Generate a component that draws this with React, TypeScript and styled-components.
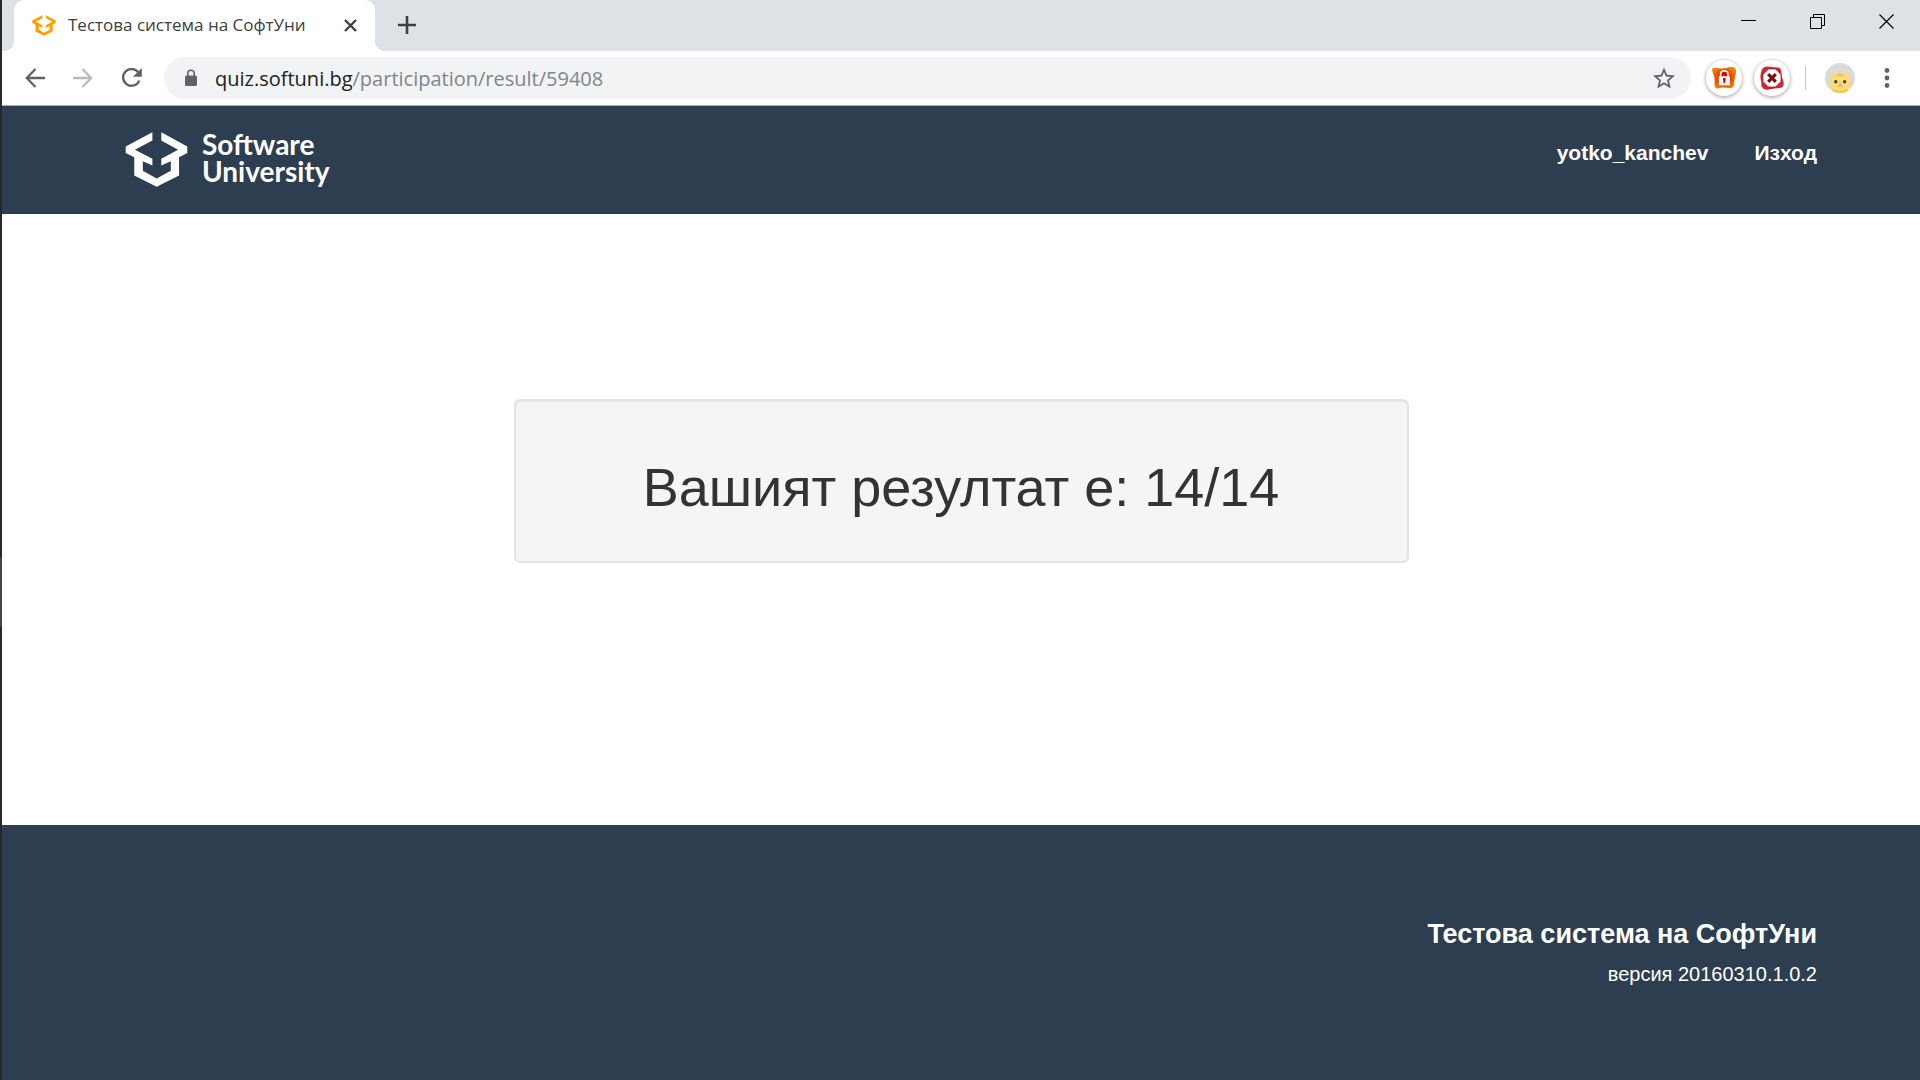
import React from "react";
import styled, { createGlobalStyle } from "styled-components";

const NAVY = "#2d3e50";
const ARIAL = `"Liberation Sans", Arial, sans-serif`;
const SEGOE = `"Open Sans", "Noto Sans", sans-serif`;

const GlobalStyle = createGlobalStyle`
  *, *::before, *::after { box-sizing: border-box; }
  body { margin: 0; background: #fff; font-family: ${ARIAL}; }
  svg { display: block; flex: none; }
  button { margin: 0; padding: 0; border: 0; background: none; font: inherit; cursor: pointer; }
`;

const Screen = styled.div`
  display: flex;
  min-height: 100vh;
`;

const DesktopEdge = styled.div`
  flex: none;
  width: 2px;
  background: linear-gradient(#26282b 0 557px, #454545 557px 627px, #26282b 627px);
`;

const Window = styled.div`
  flex: 1;
  min-width: 0;
  display: flex;
  flex-direction: column;
`;

const TabStrip = styled.div`
  display: flex;
  align-items: flex-start;
  height: 51px;
  padding-left: 12px;
  background: #dee1e6;
`;

const Tab = styled.div`
  position: relative;
  display: flex;
  align-items: center;
  width: 361px;
  height: 51px;
  padding: 0 15px 1px 18px;
  background: #fff;
  border-radius: 10px 10px 0 0;

  &::before,
  &::after {
    content: "";
    position: absolute;
    bottom: 0;
    width: 10px;
    height: 10px;
  }
  &::before {
    right: 100%;
    background: radial-gradient(circle at 0 0, transparent 10px, #fff 10px);
  }
  &::after {
    left: 100%;
    background: radial-gradient(circle at 100% 0, transparent 10px, #fff 10px);
  }
`;

const TabTitle = styled.span`
  flex: 1;
  padding-left: 12px;
  font: 17px/24px ${SEGOE};
  color: #3c4043;
  white-space: nowrap;
`;

const IconButton = styled.button<{ $w: number; $h: number; $color?: string }>`
  display: flex;
  flex: none;
  align-items: center;
  justify-content: center;
  width: ${(p) => p.$w}px;
  height: ${(p) => p.$h}px;
  color: ${(p) => p.$color ?? "#5f6368"};
`;

const WindowControls = styled.div`
  display: flex;
  margin-left: auto;
`;

const Toolbar = styled.div`
  display: flex;
  align-items: center;
  height: 55px;
  padding: 0 1px 0 9px;
  background: #fff;
  border-bottom: 1px solid #a9adb2;
`;

const AddressBar = styled.div`
  flex: 1;
  min-width: 0;
  display: flex;
  align-items: center;
  height: 42px;
  margin: 0 15px 0 9px;
  padding: 0 10px 0 20px;
  border-radius: 21px;
  background: #f1f3f4;
  color: #5f6368;
  font: 20px/28px ${SEGOE};
`;

const Host = styled.label`
  padding: 2px 0 0 17px;
  color: #202124;
`;

const PathInput = styled.input`
  flex: 1;
  min-width: 0;
  padding: 2px 0 0;
  border: 0;
  outline: 0;
  background: none;
  font: inherit;
  color: #80868b;
`;

const Extensions = styled.div`
  display: flex;
  align-items: center;
  gap: 12px;
`;

const Badge = styled.button`
  display: flex;
  align-items: center;
  justify-content: center;
  width: 36px;
  height: 36px;
  border-radius: 50%;
  background: #fff;
  box-shadow: 0 1px 4px rgba(0, 0, 0, 0.4);
`;

const Divider = styled.span`
  width: 1px;
  height: 24px;
  margin: 0 19px 0 15px;
  background: #c6c8ca;
`;

const SiteHeader = styled.header`
  display: flex;
  justify-content: space-between;
  align-items: flex-start;
  height: 108px;
  padding: 25px 103px 0 123px;
  background: ${NAVY};
  color: #fff;
`;

const Brand = styled.a`
  display: flex;
  align-items: flex-end;
  gap: 14px;
  height: 56px;
  color: #fff;
  text-decoration: none;
`;

const BrandName = styled.span`
  align-self: flex-start;
  width: min-content;
  font: 700 28px/27px Lato, sans-serif;
`;

const Nav = styled.nav`
  display: flex;
  gap: 46px;
  padding-top: 9px;
`;

const NavLink = styled.a`
  font-size: 21px;
  line-height: 26px;
  font-weight: 700;
  color: #fff;
  text-decoration: none;
`;

const Main = styled.main`
  flex: 1;
  display: flex;
  justify-content: center;
  align-items: flex-start;
  padding: 185px 20px 0;
`;

const ResultCard = styled.section`
  width: 895px;
  padding: 60px 20px 48px;
  border: 2px solid #e3e3e3;
  border-radius: 6px;
  background: #f5f5f5;
  box-shadow: inset 0 1px 2px rgba(0, 0, 0, 0.06);
  text-align: center;
`;

const ResultTitle = styled.h1`
  margin: 0;
  font-size: 54px;
  line-height: 52px;
  font-weight: 400;
  color: #333;
`;

const SiteFooter = styled.footer`
  height: 255px;
  padding: 93px 103px 0;
  background: ${NAVY};
  color: #fff;
  text-align: right;
`;

const FooterTitle = styled.h2`
  margin: 0;
  font-size: 27px;
  line-height: 32px;
  font-weight: 700;
`;

const Version = styled.p`
  margin: 11px 0 0;
  font-size: 20px;
  line-height: 26px;
`;

const BoxLogo = ({ width, height, color }: { width: number; height: number; color: string }) => (
  <svg width={width} height={height} viewBox="75 96 189 167" aria-hidden="true">
    <path
      fill={color}
      d="M157 97 76 140V160L102 173V228L170 262 238 228V173L263 160V140L184 97V122L235 150 184 177V198L213 185V214L170 237 128 214V185L157 198V177L104 150 157 122Z"
    />
  </svg>
);

export default function App() {
  return (
    <>
      <GlobalStyle />
      <Screen>
        <DesktopEdge />
        <Window>
          <TabStrip>
            <Tab>
              <BoxLogo width={24} height={21} color="#ffa000" />
              <TabTitle>Тестова система на СофтУни</TabTitle>
              <IconButton $w={20} $h={20} $color="#3c4043" aria-label="Close tab">
                <svg width="13" height="13" viewBox="0 0 13 13" stroke="currentColor" strokeWidth="2.4">
                  <path d="M1 1 12 12M12 1 1 12" />
                </svg>
              </IconButton>
            </Tab>
            <IconButton $w={64} $h={50} $color="#3c4043" aria-label="New tab">
              <svg width="18" height="18" viewBox="0 0 18 18" stroke="currentColor" strokeWidth="2.6">
                <path d="M9 0V18M0 9H18" />
              </svg>
            </IconButton>
            <WindowControls>
              <IconButton $w={69} $h={43} $color="#000" aria-label="Minimize">
                <svg width="15" height="15" viewBox="0 0 15 15" stroke="currentColor">
                  <path d="M0 6.5H15" />
                </svg>
              </IconButton>
              <IconButton $w={69} $h={43} $color="#000" aria-label="Restore">
                <svg width="15" height="15" viewBox="0 0 15 15" fill="none" stroke="currentColor">
                  <path d="M.5 3.5H11.5V14.5H.5ZM3.5 3.5V.5H14.5V11.5H11.5" />
                </svg>
              </IconButton>
              <IconButton $w={68} $h={43} $color="#000" aria-label="Close">
                <svg width="15" height="15" viewBox="0 0 15 15" stroke="currentColor" strokeWidth="1.2">
                  <path d="M.5.5 14.5 14.5M14.5.5.5 14.5" />
                </svg>
              </IconButton>
            </WindowControls>
          </TabStrip>

          <Toolbar>
            <IconButton $w={48} $h={42} aria-label="Back">
              <svg width="20" height="20" viewBox="0 0 20 20" fill="none" stroke="currentColor" strokeWidth="2.3">
                <path d="M20 10H2M10.5 1 1.8 10 10.5 19" />
              </svg>
            </IconButton>
            <IconButton $w={48} $h={42} $color="#b9bbbe" aria-label="Forward">
              <svg width="20" height="20" viewBox="0 0 20 20" fill="none" stroke="currentColor" strokeWidth="2.3">
                <path d="M0 10H18M9.5 1 18.2 10 9.5 19" />
              </svg>
            </IconButton>
            <IconButton $w={48} $h={42} aria-label="Reload">
              <svg width="21" height="20" viewBox="0 0 21 20" fill="none">
                <path d="M17.3 4.4A8.4 8.4 0 1 0 18.3 12.6" stroke="currentColor" strokeWidth="2.4" />
                <path d="M20.8 0V8.8H12Z" fill="currentColor" />
              </svg>
            </IconButton>
            <AddressBar>
              <svg width="14" height="18" viewBox="0 0 14 18" aria-hidden="true">
                <rect x="1" y="6.5" width="12" height="10.5" rx="1.5" fill="currentColor" />
                <path d="M3.8 7V4.5A3.2 3.2 0 0 1 10.2 4.5V7" fill="none" stroke="currentColor" strokeWidth="1.6" />
              </svg>
              <Host htmlFor="address">quiz.softuni.bg</Host>
              <PathInput id="address" type="text" defaultValue="/participation/result/59408" spellCheck={false} />
              <IconButton $w={34} $h={34} aria-label="Bookmark this page">
                <svg width="22" height="22" viewBox="2 2 20 19">
                  <path
                    fill="currentColor"
                    d="M22 9.24 14.81 8.62 12 2 9.19 8.63 2 9.24 7.46 13.97 5.82 21 12 17.27 18.18 21 16.55 13.97ZM12 15.4 8.24 17.67 9.24 13.39 5.92 10.51 10.3 10.13 12 6.1 13.71 10.14 18.09 10.52 14.77 13.4 15.77 17.68Z"
                  />
                </svg>
              </IconButton>
            </AddressBar>
            <Extensions>
              <Badge aria-label="Password extension">
                <svg width="24" height="22" viewBox="0 0 24 22">
                  <defs>
                    <radialGradient id="orange" cx="50%" cy="50%" r="60%">
                      <stop offset="0.35" stopColor="#dd3a00" />
                      <stop offset="1" stopColor="#fb8c00" />
                    </radialGradient>
                  </defs>
                  <path
                    fill="url(#orange)"
                    d="M0 3Q0 0 4 .8Q9 2 14 1Q20-1 23 1Q25 3 23.5 8Q22 14 22 18Q21 22 16 21Q10 20 6 21.5Q2 22 2.5 16Q3 10 .8 6Z"
                  />
                  <path d="M8.7 9.5V7A3.6 3.2 0 0 1 15.9 7V9.5" fill="#e00000" stroke="#fff" strokeWidth="1.7" />
                  <rect x="6.8" y="9.3" width="11" height="9" fill="#fff" />
                  <path d="M11 11H13.6V13.4L13.2 14V16.3H11.4V14L11 13.4Z" fill="#d80000" />
                </svg>
              </Badge>
              <Badge aria-label="Blocker extension">
                <svg width="24" height="24" viewBox="0 0 24 24">
                  <path
                    fill="#cf2634"
                    d="M2.5 2.5Q5 0 9 .8Q14 1.5 18 1.5Q21.5 2 21.5 7Q21.5 11 23.5 16Q24.5 21.5 20 22Q15 22 9 23.5Q3 24.5 1.5 20Q1.5 16 .5 12Q0 7 2.5 2.5Z"
                  />
                  <path
                    fill="#fff"
                    stroke="#9c1522"
                    strokeWidth=".8"
                    d="M8.4 3H15.6L21 8.4V15.6L15.6 21H8.4L3 15.6V8.4Z"
                  />
                  <path d="M8.2 8.2 15.8 15.8M15.8 8.2 8.2 15.8" stroke="#7d0a14" strokeWidth="3.1" />
                </svg>
              </Badge>
            </Extensions>
            <Divider />
            <IconButton $w={30} $h={30} aria-label="Profile">
              <svg width="30" height="30" viewBox="0 0 30 30">
                <circle cx="15" cy="15" r="15" fill="#d9dadc" />
                <path
                  fill="#fadb77"
                  d="M7 8Q9.5 8.8 11.5 11Q15 10 18.5 11Q20.5 8.8 23 8Q24.2 12 24 15.5Q26.6 19 25 22.5Q24.5 25 23 27.7A15 15 0 0 1 7 27.7Q5.5 25 5 22.5Q3.4 19 6 15.5Q5.8 12 7 8Z"
                />
                <path d="M7 25.5Q15 30 23 25.5L22 28.3A15 15 0 0 1 8 28.3Z" fill="#f3c64c" />
                <path d="M15 10.6V14M12.4 11 12.9 13.2M17.6 11 17.1 13.2" stroke="#e9a840" strokeWidth="1.1" />
                <circle cx="10.8" cy="18.7" r="1.7" fill="#4b4038" />
                <circle cx="19.6" cy="18.7" r="1.7" fill="#4b4038" />
                <path d="M13.8 20.5H16.5L15.2 22.2Z" fill="#f07a70" />
                <path d="M12.8 23Q14.2 24.2 15.2 22.6Q16.2 24.2 17.5 23" fill="none" stroke="#c98f35" strokeWidth=".8" />
              </svg>
            </IconButton>
            <IconButton $w={64} $h={42} aria-label="Menu">
              <svg width="6" height="20" viewBox="0 0 6 20" fill="currentColor">
                <circle cx="3" cy="2.5" r="2.4" />
                <circle cx="3" cy="10" r="2.4" />
                <circle cx="3" cy="17.5" r="2.4" />
              </svg>
            </IconButton>
          </Toolbar>

          <SiteHeader>
            <Brand href="#">
              <BoxLogo width={63} height={55} color="#fff" />
              <BrandName>Software University</BrandName>
            </Brand>
            <Nav>
              <NavLink href="#">yotko_kanchev</NavLink>
              <NavLink href="#">Изход</NavLink>
            </Nav>
          </SiteHeader>

          <Main>
            <ResultCard>
              <ResultTitle>Вашият резултат е: 14/14</ResultTitle>
            </ResultCard>
          </Main>

          <SiteFooter>
            <FooterTitle>Тестова система на СофтУни</FooterTitle>
            <Version>версия 20160310.1.0.2</Version>
          </SiteFooter>
        </Window>
      </Screen>
    </>
  );
}
